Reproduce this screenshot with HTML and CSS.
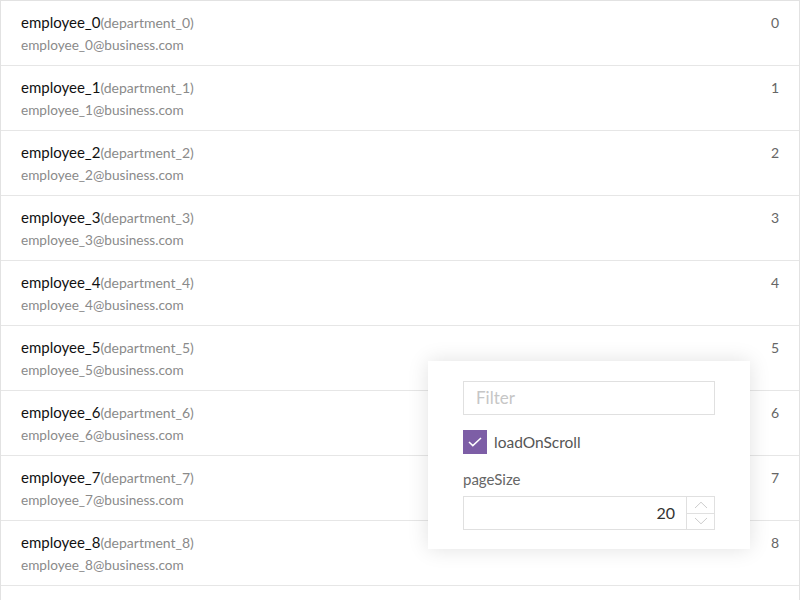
FILE: index.html
```html
<!DOCTYPE html>
<html>
<head>
<meta charset="utf-8">
<link rel="stylesheet" href="styles.css">
</head>
<body>
<div class="list">
  <div class="row"><div class="info"><div class="name">employee_0<span class="dept">(department_0)</span></div><div class="email">employee_0@business.com</div></div><div class="num">0</div></div>
  <div class="row"><div class="info"><div class="name">employee_1<span class="dept">(department_1)</span></div><div class="email">employee_1@business.com</div></div><div class="num">1</div></div>
  <div class="row"><div class="info"><div class="name">employee_2<span class="dept">(department_2)</span></div><div class="email">employee_2@business.com</div></div><div class="num">2</div></div>
  <div class="row"><div class="info"><div class="name">employee_3<span class="dept">(department_3)</span></div><div class="email">employee_3@business.com</div></div><div class="num">3</div></div>
  <div class="row"><div class="info"><div class="name">employee_4<span class="dept">(department_4)</span></div><div class="email">employee_4@business.com</div></div><div class="num">4</div></div>
  <div class="row"><div class="info"><div class="name">employee_5<span class="dept">(department_5)</span></div><div class="email">employee_5@business.com</div></div><div class="num">5</div></div>
  <div class="row"><div class="info"><div class="name">employee_6<span class="dept">(department_6)</span></div><div class="email">employee_6@business.com</div></div><div class="num">6</div></div>
  <div class="row"><div class="info"><div class="name">employee_7<span class="dept">(department_7)</span></div><div class="email">employee_7@business.com</div></div><div class="num">7</div></div>
  <div class="row"><div class="info"><div class="name">employee_8<span class="dept">(department_8)</span></div><div class="email">employee_8@business.com</div></div><div class="num">8</div></div>
</div>
<div class="panel">
  <div class="filter">Filter</div>
  <label class="check"><span class="box"><svg width="14" height="10" viewBox="0 0 14 10"><path d="M1 5 L4.8 8.6 L13 1" fill="none" stroke="#fff" stroke-width="1.5"/></svg></span><span class="check-label">loadOnScroll</span></label>
  <div class="field-label">pageSize</div>
  <div class="spin">
    <div class="spin-value">20</div>
    <div class="spin-btns">
      <div class="spin-btn"><svg width="14" height="8" viewBox="0 0 14 8"><path d="M1 7 L7 1.2 L13 7" fill="none" stroke="#cdcdcd" stroke-width="1"/></svg></div>
      <div class="spin-btn"><svg width="14" height="8" viewBox="0 0 14 8"><path d="M1 1 L7 6.8 L13 1" fill="none" stroke="#cdcdcd" stroke-width="1"/></svg></div>
    </div>
  </div>
</div>
</body>
</html>
```
FILE: styles.css
```css
html, body {
  margin: 0;
  padding: 0;
  background: #fff;
  overflow: hidden;
}
body {
  font-family: "Lato", "Liberation Sans", sans-serif;
  width: 800px;
  height: 600px;
  position: relative;
}
.list {
  height: 600px;
  box-sizing: border-box;
  border: 1px solid #e2e2e2;
  border-bottom: none;
}
.row {
  height: 64px;
  border-bottom: 1px solid #e6e6e6;
  display: flex;
  justify-content: space-between;
  padding: 0 20px;
  box-sizing: content-box;
}
.info {
  padding-top: 11px;
}
.name {
  font-size: 15px;
  color: #111;
  line-height: 20px;
}
.dept {
  font-size: 14px;
  color: #8a8a8a;
}
.email {
  font-size: 13.6px;
  color: #8a8a8a;
  line-height: 20px;
  margin-top: 2px;
}
.num {
  padding-top: 12px;
  font-size: 14px;
  color: #666;
  line-height: 20px;
}
.panel {
  position: absolute;
  left: 428px;
  top: 361px;
  width: 322px;
  height: 188px;
  background: #fff;
  box-shadow: 0 0 20px rgba(0,0,0,0.12);
  box-sizing: border-box;
  padding: 20px 35px;
}
.filter {
  height: 34px;
  border: 1px solid #e0e0e0;
  box-sizing: border-box;
  padding: 0 12px;
  line-height: 32px;
  font-size: 17px;
  color: #c6c6c6;
}
.check {
  display: flex;
  align-items: center;
  margin-top: 15px;
  height: 24px;
}
.box {
  width: 24px;
  height: 24px;
  background: #7d5ea6;
  display: flex;
  align-items: center;
  justify-content: center;
}
.check-label {
  margin-left: 7px;
  font-size: 15.5px;
  color: #555;
}
.field-label {
  margin-top: 15px;
  font-size: 15px;
  color: #666;
  line-height: 20px;
}
.spin {
  margin-top: 7px;
  height: 34px;
  border: 1px solid #e0e0e0;
  box-sizing: border-box;
  display: flex;
}
.spin-value {
  flex: 1;
  text-align: right;
  padding-right: 11px;
  font-size: 16px;
  line-height: 32px;
  color: #333;
}
.spin-btns {
  width: 27px;
  border-left: 1px solid #e0e0e0;
  display: flex;
  flex-direction: column;
}
.spin-btn {
  flex: 1;
  display: flex;
  align-items: center;
  justify-content: center;
}
.spin-btn + .spin-btn {
  border-top: 1px solid #e0e0e0;
}
```
